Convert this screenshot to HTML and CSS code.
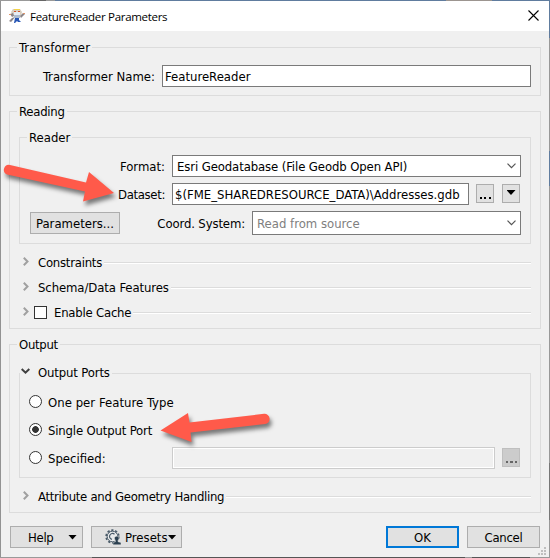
FILE: index.html
```html
<!DOCTYPE html>
<html lang="en">
<head>
<meta charset="utf-8">
<title>FeatureReader Parameters</title>
<link rel="stylesheet" href="styles.css">
</head>
<body>
<div class="desktop">
<main class="window">
  <header class="titlebar">
    <svg class="app-icon" width="16" height="16" viewBox="0 0 16 16">
      <path d="M4 1h7l2 3-1 4H4L2 4z" fill="#d9cfc0"/><path d="M5 1h6v1H5z" fill="#f2d34a"/>
      <path d="M5 3h2v1H5zM9 3h2v1H9z" fill="#d0542a"/><path d="M5 4h6v3H5z" fill="#e6edf5"/>
      <path d="M1 6l3-1 1 3-2 1zM11 8l3-3 2 1-4 4zM0 13l3-3 3-1-3 4-1 1z" fill="#8b8588"/>
      <path d="M5 7h6v3H5z" fill="#aebccf"/><path d="M6 10h4v2l2 2h-3l-1-1-2 2H5z" fill="#2756b5"/>
      <path d="M0 6h2v1H0zM14 5h2v1h-2z" fill="#df9469"/>
    </svg>
    <h1 class="title">FeatureReader Parameters</h1>
    <svg class="close" width="11" height="11" viewBox="0 0 11 11"><path d="M.5.5l10 10M10.500.5l-10 10" fill="none" stroke="#000" stroke-width="1.1"/></svg>
  </header>

  <section class="group transformer">
    <h2 class="legend t-transformer">Transformer</h2>
    <div class="row name-row"><label class="label">Transformer Name:</label><div class="field grow"><span>FeatureReader</span></div></div>
  </section>

  <section class="group reading">
    <h2 class="legend t-reading">Reading</h2>
    <div class="group reader">
      <h3 class="legend">Reader</h3>
      <div class="row format-row"><label class="label">Format:</label><div class="field combo grow"><span>Esri Geodatabase (File Geodb Open API)</span><svg class="arrow" width="9" height="6" viewBox="0 0 9 6"><path d="M.5.7l4 4 4-4"/></svg></div></div>
      <div class="row dataset-row"><label class="label">Dataset:</label><div class="field dataset"><span>$(FME_SHAREDRESOURCE_DATA)\Addresses.gdb</span></div><div class="tool"><i class="dots"></i></div><div class="tool menu"><i class="down"></i></div></div>
      <div class="row coord-row"><div class="button params"><span>Parameters...</span></div><label class="label">Coord. System:</label><div class="field combo coord grow"><span>Read from source</span><svg class="arrow" width="9" height="6" viewBox="0 0 9 6"><path d="M.5.7l4 4 4-4"/></svg></div></div>
    </div>
    <div class="expander"><svg class="chev" width="6" height="9" viewBox="0 0 6 9"><path d="M.8.8l3.700 3.700-3.700 3.700"/></svg><span class="t-constraints">Constraints</span><i class="rule"></i></div>
    <div class="expander"><svg class="chev" width="6" height="9" viewBox="0 0 6 9"><path d="M.8.8l3.700 3.700-3.700 3.700"/></svg><span class="t-schema">Schema/Data Features</span><i class="rule"></i></div>
    <div class="expander"><svg class="chev" width="6" height="9" viewBox="0 0 6 9"><path d="M.8.8l3.700 3.700-3.700 3.700"/></svg><i class="check"></i><span class="t-cache">Enable Cache</span><i class="rule"></i></div>
  </section>

  <section class="group output">
    <h2 class="legend t-output">Output</h2>
    <div class="ports-head"><svg class="open" width="9" height="7" viewBox="0 0 9 7"><path d="M.7 1l3.800 3.700L8.300 1"/></svg><span class="t-ports">Output Ports</span><i class="rule plain"></i></div>
    <div class="ports">
      <div class="radio-row"><i class="radio"></i><span class="t-one">One per Feature Type</span></div>
      <div class="radio-row"><i class="radio on"></i><span class="t-single">Single Output Port</span></div>
      <div class="radio-row"><i class="radio"></i><span>Specified:</span><div class="field disabled"></div><div class="tool off"><i class="dots"></i></div></div>
    </div>
    <div class="expander attribute"><svg class="chev" width="6" height="9" viewBox="0 0 6 9"><path d="M.8.8l3.700 3.700-3.700 3.700"/></svg><span class="t-attribute">Attribute and Geometry Handling</span><i class="rule"></i></div>
  </section>

  <footer class="actions">
    <div class="button help"><span class="t-help">Help</span><i class="down"></i></div>
    <div class="button presets">
      <svg width="17" height="17" viewBox="0 0 17 17">
        <circle cx="7.500" cy="7.500" r="6.300" fill="none" stroke="#4a5b69" stroke-width="1.800" stroke-dasharray="2.200 1.750"/>
        <circle cx="7.500" cy="7.500" r="5.300" fill="#e8eaeb" stroke="#4a5b69"/>
        <path d="M9.500 5.200A3 3 0 1 0 7 10.400" fill="none" stroke="#4a5b69" stroke-width="1.200"/>
        <path d="M8 15.800v-2.300l2.500-.8v-1.200l-1-1.500V8.500l1.500-1.300h1.500L14 8.500V10l-1 1.500v1.200l3 .8v2.300z" fill="#2b4050" stroke="#e1e1e1" stroke-width=".5"/>
      </svg><span class="t-presets">Presets</span><i class="down"></i></div>
    <div class="button ok"><span>OK</span></div>
    <div class="button cancel"><span class="t-cancel">Cancel</span></div>
  </footer>
  <svg class="grip" width="8" height="8" viewBox="0 0 8 8"><path d="M6 0h2v2H6zM3 3h2v2H3zM6 3h2v2H6zM0 6h2v2H0zM3 6h2v2H3zM6 6h2v2H6z" fill="#bfbfbf"/></svg>
</main>
<svg class="annotations" width="550" height="558" viewBox="0 0 550 558">
  <path d="M10 165L86 182.500 89 172 114 193 83 201.500 85 191.500 7 174.500A5 5 0 0 1 10 165z"/>
  <path d="M264 413.800L189.500 422.500 188 413 160.500 430.500 191.500 442 190.500 432.500 265 424A5 5 0 0 0 264 413.800z"/>
</svg>
</div>
</body>
</html>
```
FILE: styles.css
```css
* { box-sizing: border-box; }
body { margin: 0; width: 550px; height: 558px; overflow: hidden; font: 13px/16px "DejaVu Sans Condensed", "DejaVu Sans", sans-serif; font-stretch: condensed; color: #000; }
.desktop { position: relative; width: 550px; height: 558px; padding: 1px; background:
  linear-gradient(90deg, #999 0 30px, #666 30px 46px, #999 46px 55px, #607c9e 55px 446px, #9c9590 446px 492px, #607c9e 492px) 0 0 / 550px 1px no-repeat,
  linear-gradient(90deg, #999 0 92px, #555 92px 465px, #999 465px 472px, #555 472px 530px, #999 530px) 0 557px / 550px 1px no-repeat,
  linear-gradient(#607c9e 0 38px, #999 38px 151px, #607c9e 151px 186px, #999 186px 463px, #777 463px 520px, #999 520px) 549px 0 / 1px 558px no-repeat, #929292; }
.window { width: 548px; height: 556px; background: #f0f0f0; display: flex; flex-direction: column; }
h1, h2, h3 { margin: 0; font-size: inherit; font-weight: normal; }
span, label, h1, h2, h3 { white-space: nowrap; }
svg { flex: none; display: block; }
.titlebar { height: 30px; flex: none; background: #fff; display: flex; align-items: center; padding: 0 10px 0 8px; }
.title { font: 11.5px/16px "Open Sans", sans-serif; letter-spacing: -.3px; margin-left: 5px; padding-top: 1px; flex: 1; }
.close { margin-top: -2px; }
.group { border: 1px solid #dcdcdc; }
.transformer, .reading, .output { margin: 0 8px; flex: none; }
.transformer { margin-top: 16px; height: 49px; }
.reading { margin-top: 15px; height: 218px; }
.output { margin-top: 15px; height: 169px; }
.legend { width: max-content; height: 16px; line-height: 18px; margin: -9px 0 0 7px; padding: 0 2px; background: #f0f0f0; }
.row { display: flex; align-items: center; }
.row span, .row label, .radio-row span, .button span { padding-top: 2px; }
.label { text-align: right; padding-right: 7px; }
.field { height: 22px; border: 1px solid #7a7a7a; background: #fff; display: flex; align-items: center; padding-left: 2px; overflow: hidden; }
.grow { flex: 1; }
.name-row { padding: 10px 9px 0 0; }
.name-row .label { width: 152px; }
.reader { height: 107px; margin: 18px 9px 0; }
.format-row { padding: 10px 9px 0 0; }
.format-row .label, .dataset-row .label { width: 152px; }
.dataset-row .label { letter-spacing: -.35px; }
.format-row span { letter-spacing: -.11px; }
.combo { padding: 0 4px; justify-content: space-between; }
.arrow path { fill: none; stroke: #555; stroke-width: 1.2; }
.dataset-row { padding-top: 6px; }
.dataset { width: 297px; }
.tool { width: 18px; height: 19px; margin: -1px 0 0 7px; border: 1px solid #adadad; background: #e1e1e1; display: flex; justify-content: center; flex: none; }
.tool.menu { margin-left: 8px; }
.dots { width: 11px; height: 2px; margin-top: 12px; background: repeating-linear-gradient(90deg, #000 0 2px, transparent 2px 4.500px); }
.down { width: 9px; height: 5px; background: #000; clip-path: polygon(0 0, 100% 0, 50% 100%); }
.tool .down { margin-top: 5px; }
.coord-row { padding: 6px 9px 0 10px; }
.button { height: 22px; border: 1px solid #adadad; background: #e1e1e1; display: flex; align-items: center; justify-content: center; }
.params { width: 90px; }
.coord-row .label { width: 132px; letter-spacing: -.13px; }
.coord { height: 24px; color: #808080; }
.expander { height: 25px; display: flex; align-items: center; padding: 0 9px 0 13px; }
.reader + .expander { margin-top: 6px; }
.chev { margin: -2px 9px 0 0; }
.chev path { fill: none; stroke: #a0a0a0; stroke-width: 2; }
.rule { flex: 1; height: 2px; margin-left: 2px; margin-top: 1px; background: linear-gradient(#dcdcdc 50%, #fff 50%); }
.rule.plain { height: 1px; background: #dcdcdc; }
.check { width: 13px; height: 13px; border: 1px solid #333; background: #fff; margin: 0 7px 0 -4px; }
.ports-head { height: 16px; margin-top: 13px; padding: 0 9px 0 11px; display: flex; align-items: center; }
.open { margin: -3px 8px 0 0; }
.open path { fill: none; stroke: #404040; stroke-width: 2; }
.ports { height: 105px; margin: -8px 9px 0; border: solid #dcdcdc; border-width: 0 1px 1px; padding: 15px 10px 0 9px; background: none; }
.ports-head span, .ports-head svg { position: relative; z-index: 1; }
.radio-row { height: 28px; display: flex; align-items: center; }
.radio { width: 13px; height: 13px; flex: none; border: 1px solid #333; border-radius: 50%; background: #fff; margin: 0 6px 1px 0; }
.radio.on { background: radial-gradient(circle, #333 0 3px, #fff 3.700px); }
.disabled { width: 323px; margin-left: auto; border-color: #ccc; background: #f0f0f0; box-shadow: inset 0 0 0 1px #fff; }
.tool.off { background: #ccc; border-color: #bfbfbf; }
.off .dots { opacity: .5; }
.attribute { margin-top: 6px; }
.t-transformer { letter-spacing: .1px; }
.t-reading { letter-spacing: -.25px; }
.t-output { letter-spacing: -.3px; }
.t-constraints { letter-spacing: -.25px; }
.t-schema { letter-spacing: -.1px; }
.t-cache { letter-spacing: -.22px; }
.t-ports { letter-spacing: -.15px; }
.t-one { letter-spacing: .03px; }
.t-single { letter-spacing: -.17px; }
.t-attribute { letter-spacing: -.29px; }
.t-help, .t-cancel { letter-spacing: -.3px; }
.actions { display: flex; margin-top: 13px; padding: 0 8px 0 9px; }
.help { width: 73px; justify-content: space-between; padding: 0 5px 0 17px; }
.presets { width: 91px; margin-left: 8px; justify-content: flex-start; padding-left: 13px; }
.t-presets { margin-left: 3px; }
.ok { width: 73px; margin-left: auto; border: 2px solid #0078d7; }
.cancel { width: 73px; margin: 0 1px 0 8px; }
.grip { margin: -1px 3px 0 auto; }
.annotations { position: absolute; left: 0; top: 0; filter: drop-shadow(2px 4px 2px rgba(0,0,0,.5)); }
.annotations path { fill: #ff5a4a; }
```
